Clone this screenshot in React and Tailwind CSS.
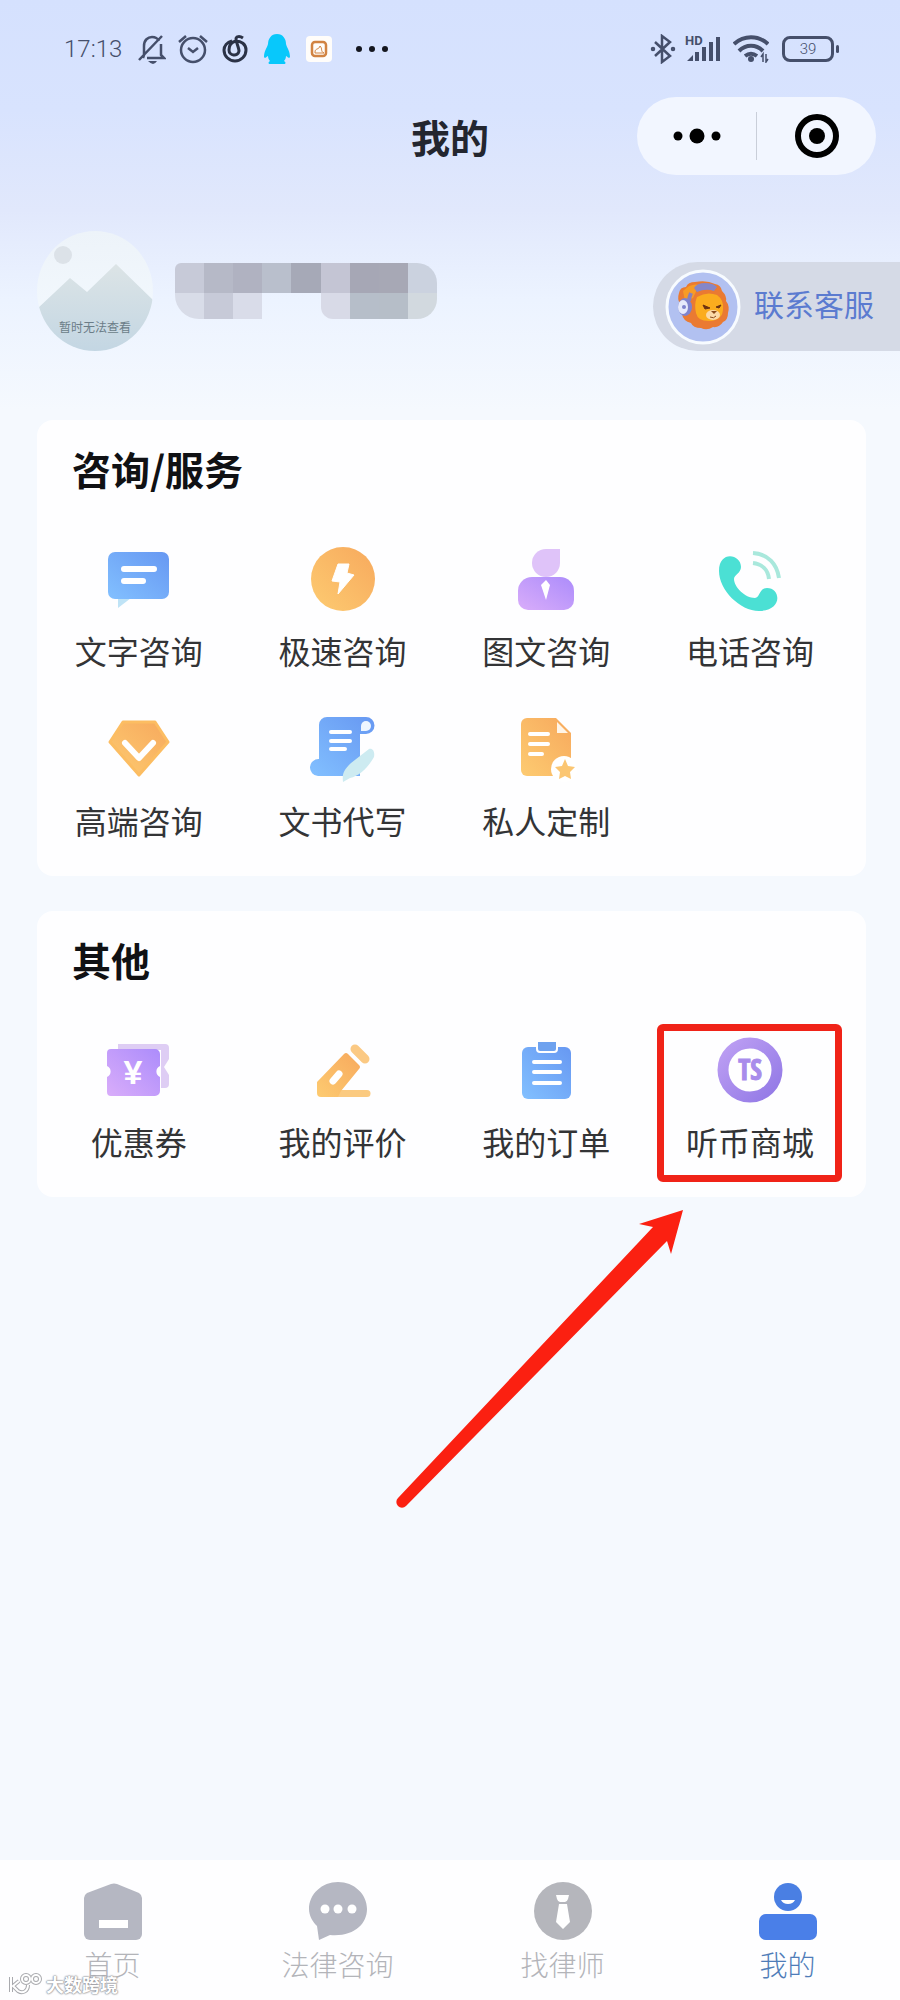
import React from "react";

const Gradients = () => (
  <svg className="absolute w-0 h-0" aria-hidden="true">
    <defs>
      <linearGradient id="blue" x1="1" y1="0" x2="0" y2="1">
        <stop offset="0" stopColor="#6798f2" />
        <stop offset="1" stopColor="#82c0ff" />
      </linearGradient>
      <linearGradient id="orange" x1="1" y1="0" x2="0" y2="1">
        <stop offset="0" stopColor="#f7a95d" />
        <stop offset="1" stopColor="#fdcb71" />
      </linearGradient>
      <linearGradient id="purple" x1="1" y1="0" x2="0" y2="1">
        <stop offset="0" stopColor="#ac8cfb" />
        <stop offset="1" stopColor="#d9adfa" />
      </linearGradient>
      <linearGradient id="ring" x1="0" y1="0" x2="1" y2="1">
        <stop offset="0" stopColor="#bd9ff3" />
        <stop offset="1" stopColor="#9279e6" />
      </linearGradient>
      <linearGradient id="sky" x1="0" y1="0" x2="0" y2="1">
        <stop offset="0" stopColor="#edf3f9" />
        <stop offset="1" stopColor="#f4faff" />
      </linearGradient>
      <linearGradient id="hill" x1="0" y1="0" x2="0" y2="1">
        <stop offset="0" stopColor="#dce4e6" />
        <stop offset="1" stopColor="#c3d6e3" />
      </linearGradient>
    </defs>
  </svg>
);

const Icon = ({ children }) => (
  <svg viewBox="0 0 72 72" className="w-[72px] h-[72px]" fill="none" aria-hidden="true">
    {children}
  </svg>
);

const TextIcon = () => (
  <Icon>
    <path d="M15 56v10l13-10z" fill="#bfe3f6" />
    <rect x="5" y="10" width="61" height="47" rx="7" fill="url(#blue)" />
    <path d="M21 27h30M21 39h19" stroke="#fff" strokeWidth="6" strokeLinecap="round" />
  </Icon>
);

const BoltIcon = () => (
  <Icon>
    <circle cx="36" cy="37" r="32" fill="url(#orange)" />
    <path
      d="M31 22h11l-2 9 7 2-16 19 2-12-8-1z"
      fill="#fff"
      stroke="#fff"
      strokeWidth="1"
      strokeLinejoin="round"
    />
  </Icon>
);

const PersonIcon = () => (
  <Icon>
    <path d="M36 7h14v14a14 14 0 1 1-14-14z" fill="#dfc3f9" />
    <path
      d="M22 35h28a14 14 0 0 1 14 14v9a10 10 0 0 1-10 10H18A10 10 0 0 1 8 58v-9a14 14 0 0 1 14-14z"
      fill="url(#purple)"
    />
    <path d="M36 38l4 5-4 15-5-15z" fill="#fff" />
  </Icon>
);

const PhoneIcon = () => (
  <Icon>
    <path
      d="M5 29C5 8 27 12 27 25c0 6-7 8-7 12 0 8 11 19 21 19 5 0 4-10 12-10 14 0 16 23-8 23C26 69 5 48 5 29z"
      fill="#4be0d4"
    />
    <path d="M39 11c15 1 24 11 26 25" stroke="#a9e8dc" strokeWidth="4" />
    <path d="M39 21c9 1 15 7 16 16" stroke="#a9e8dc" strokeWidth="4" />
  </Icon>
);

const DiamondIcon = () => (
  <Icon>
    <path
      d="M20 10h32l13 20-29 33L7 30z"
      fill="url(#orange)"
      stroke="#fcbd62"
      strokeWidth="3"
      strokeLinejoin="round"
    />
    <path
      d="M22 31l14 15 14-15"
      stroke="#fff"
      strokeWidth="6"
      strokeLinecap="round"
      strokeLinejoin="round"
    />
  </Icon>
);

const ScrollIcon = () => (
  <Icon>
    <path
      d="M20 5h39a8 8 0 0 1 0 17h-6v42H11A8 8 0 0 1 12 47V13a8 8 0 0 1 8-8z"
      fill="url(#blue)"
    />
    <path d="M54 18v-4a5 5 0 1 1 5 5h-5z" fill="#eef6ff" />
    <path d="M24 20h19M24 29h19M24 37h14" stroke="#fff" strokeWidth="4" strokeLinecap="round" />
    <path d="M36 70c-1-9 1-12 8-19l18-14c4-1 6 3 5 8-5 9-14 19-24 21z" fill="#cdebf1" />
  </Icon>
);

const CustomIcon = () => (
  <Icon>
    <path d="M17 6h29l15 15v43H17a6 6 0 0 1-6-6V12a6 6 0 0 1 6-6z" fill="url(#orange)" />
    <path d="M47 10v11h11z" fill="#fff5e8" />
    <path d="M20 22h18M20 32h18M20 42h12" stroke="#fff" strokeWidth="4" strokeLinecap="round" />
    <circle cx="54" cy="57" r="13" fill="#fff" />
    <path d="M55 47l3 7 7 1-5 5 1 7-6-3-6 3 1-7-5-5 7-1z" fill="#fbc672" />
  </Icon>
);

const CouponIcon = () => (
  <Icon>
    <path d="M15 11h47a4 4 0 0 1 4 4v11l-5 8 5 8v9a4 4 0 0 1-4 4h-4V17H15z" fill="#decdf4" />
    <path
      d="M8 16h44a5 5 0 0 1 5 5v12a6 6 0 0 0 0 11v14a5 5 0 0 1-5 5H8a4 4 0 0 1-4-4V44a6 6 0 0 0 0-11V20a4 4 0 0 1 4-4z"
      fill="url(#purple)"
    />
    <text
      x="30"
      y="51"
      textAnchor="middle"
      fill="#fff"
      className="text-[34px] font-bold font-['Liberation_Sans',sans-serif]"
    >
      ¥
    </text>
  </Icon>
);

const PencilIcon = () => (
  <Icon>
    <path d="M34 57h26a3 3 0 0 1 0 7H28z" fill="#fbca80" />
    <path d="M37 21q2-2 4 0l11 11q2 2 0 4L34 58l-3 6H14q-4 0-4-4V49z" fill="url(#orange)" />
    <path d="M48 16l10 10" stroke="#fbc983" strokeWidth="9" strokeLinecap="round" />
    <path d="M26 48l6-7" stroke="#fff" strokeWidth="7" strokeLinecap="round" />
  </Icon>
);

const OrderIcon = () => (
  <Icon>
    <rect x="12" y="14" width="49" height="52" rx="6" fill="url(#blue)" />
    <path d="M27 8h20v8a3 3 0 0 1-3 3H30a3 3 0 0 1-3-3z" fill="#6ea2ef" stroke="#fff" strokeWidth="2" />
    <path d="M24 29h26M24 39h26M24 50h26" stroke="#fff" strokeWidth="4" strokeLinecap="round" />
  </Icon>
);

const MallIcon = () => (
  <Icon>
    <circle cx="36" cy="37" r="27" stroke="url(#ring)" strokeWidth="11" fill="#fff" />
    <text
      x="36"
      y="47"
      textAnchor="middle"
      fill="#a98ceb"
      stroke="#a98ceb"
      className="text-[28px] font-bold font-['Liberation_Sans_Narrow','Open_Sans_Condensed','Roboto_Condensed','DejaVu_Sans_Condensed','Roboto',sans-serif]"
    >
      TS
    </text>
  </Icon>
);

const services = [
  { name: "文字咨询", icon: <TextIcon /> },
  { name: "极速咨询", icon: <BoltIcon /> },
  { name: "图文咨询", icon: <PersonIcon /> },
  { name: "电话咨询", icon: <PhoneIcon /> },
  { name: "高端咨询", icon: <DiamondIcon /> },
  { name: "文书代写", icon: <ScrollIcon /> },
  { name: "私人定制", icon: <CustomIcon /> },
];

const others = [
  { name: "优惠券", icon: <CouponIcon /> },
  { name: "我的评价", icon: <PencilIcon /> },
  { name: "我的订单", icon: <OrderIcon /> },
  { name: "听币商城", icon: <MallIcon />, marked: true },
];

const tabs = [
  {
    name: "首页",
    icon: (
      <>
        <path
          d="M27 2q3-1 6 0l22 9q3 2 3 5v36a6 6 0 0 1-6 6H6a6 6 0 0 1-6-6V16q0-3 3-5z"
          fill="#b5b7c2"
        />
        <path d="M15 38h29v8H15z" fill="#fff" />
      </>
    ),
  },
  {
    name: "法律咨询",
    icon: (
      <>
        <path d="M29 0c16 0 29 12 29 27S45 55 21 53l-11 5-2-14C4 40 0 34 0 27 0 12 13 0 29 0z" fill="#b5b7c2" />
        <circle cx="16" cy="27" r="4.5" fill="#fff" />
        <circle cx="29" cy="27" r="4.5" fill="#fff" />
        <circle cx="43" cy="27" r="4.5" fill="#fff" />
      </>
    ),
  },
  {
    name: "找律师",
    icon: (
      <>
        <circle cx="29" cy="29" r="29" fill="#b5b6bc" />
        <path d="M22 13h13l-1 4q-1 3-3 3h-5q-2 0-3-3zM25 22h8l3 18-7 7-7-7z" fill="#fff" />
      </>
    ),
  },
  {
    name: "我的",
    active: true,
    icon: (
      <>
        <circle cx="29" cy="15" r="14" fill="#4a7fe3" />
        <path d="M22 18h14q-2 4-7 4t-7-4z" fill="#fff" />
        <rect y="32" width="58" height="26" rx="7" fill="#4a7fe8" />
      </>
    ),
  },
];

const StatusBar = () => (
  <div className="flex items-center justify-between h-[97px] pl-16 pr-[61px] text-[#454f6b]">
    <div className="flex items-center">
      <span className="text-[24px] leading-8 font-light font-['Roboto',sans-serif]">17:13</span>
      <svg viewBox="0 0 28 30" className="ml-4 w-7 h-[30px]" fill="none" stroke="currentColor" strokeWidth="2.5">
        <path d="M5 24l1-3V12c0-6 4-9 8-9 3 0 6 2 7 4M23 10v11l3 3H9M1 26L24 2" />
        <path d="M10 27h9q-2 3-4 3t-5-3z" fill="currentColor" stroke="none" />
      </svg>
      <svg viewBox="0 0 30 30" className="ml-3 w-[30px] h-[30px]" fill="none" stroke="currentColor" strokeWidth="2.5">
        <circle cx="15" cy="16" r="12" />
        <path d="M10 14l5 4 5-4M1 8l7-6M29 8l-7-6" />
      </svg>
      <svg viewBox="0 0 26 28" className="ml-[14px] w-[26px] h-7" fill="none" stroke="#2b3246" strokeWidth="3">
        <path d="M10 6C5 7 2 11 2 15a11 11 0 0 0 22 0c0-6-5-9-10-9-5 1-7 5-7 9 0 6 9 7 10 1 0-3-3-9-3-12 0-3 4-3 7-1" />
      </svg>
      <svg viewBox="0 0 26 30" className="ml-4 w-[26px] h-[30px]" fill="#08c8fb">
        <path d="M13 0c6 0 9 5 9 10 1 4 4 7 4 13-1 2-2 0-4-1 0 2-1 4-2 5 2 1 2 3 0 3H6c-2 0-2-2 0-3-1-1-2-3-2-5-2 1-3 3-4 1 0-6 3-9 4-13 0-5 3-10 9-10z" />
      </svg>
      <svg viewBox="0 0 26 26" className="ml-4 w-[26px] h-[26px]" fill="none">
        <rect width="26" height="26" rx="4" fill="#fffdfa" />
        <rect x="6" y="6" width="14" height="14" rx="3" stroke="#d18342" strokeWidth="2.5" />
        <path d="M9 16c0-4 4-2 5-6 3 3 0 5 4 7H9z" stroke="#d18342" />
      </svg>
      <svg viewBox="0 0 32 8" className="ml-6 w-8 h-2" fill="#14161f">
        <circle cx="3" cy="4" r="3" />
        <circle cx="16" cy="4" r="3" />
        <circle cx="29" cy="4" r="3" />
      </svg>
    </div>
    <div className="flex items-center">
      <svg viewBox="0 0 26 30" className="w-[26px] h-[30px]" fill="none" stroke="currentColor" strokeWidth="2.5">
        <path d="M5 8l15 14-8 6V2l8 6L5 22" />
        <circle cx="3" cy="15" r="1" />
        <circle cx="23" cy="15" r="1" />
      </svg>
      <svg viewBox="0 0 36 28" className="ml-[9px] w-9 h-7" fill="currentColor">
        <text x="0" y="10" className="text-[13px] font-bold font-['Roboto',sans-serif]">
          HD
        </text>
        <path d="M2 26l6-6v6zM10 17h4v9h-4zM17 12h4v14h-4zM24 7h4v19h-4zM31 2h4v24h-4z" />
      </svg>
      <svg viewBox="0 0 36 28" className="ml-3 w-9 h-7" fill="none" stroke="currentColor" strokeWidth="4">
        <path d="M1 9c10-9 24-9 34 0M6 16c7-7 17-7 24 0M12 21c4-3 8-3 12 0" />
        <circle cx="18" cy="24" r="3" fill="currentColor" stroke="none" />
        <path d="M30 27v-8l-2 3M33 19v8l2-3" strokeWidth="1.5" />
      </svg>
      <div className="ml-[13px] w-[52px] h-[26px] rounded-lg border-[3px] border-current flex items-center justify-center text-[15px] leading-5 font-light font-['Roboto',sans-serif]">
        39
      </div>
      <div className="ml-[2px] w-[3px] h-2 rounded-sm bg-[#454f6b]"></div>
    </div>
  </div>
);

const TitleBar = () => (
  <div className="grid grid-cols-[1fr_auto_1fr] items-center h-[78px]">
    <h1 className="col-start-2 text-[39px] leading-[46px] font-bold text-[#23262f]">我的</h1>
    <div className="justify-self-end mr-6 w-[239px] h-[78px] rounded-full bg-[#f2f6ff] flex items-center">
      <button aria-label="更多" className="flex-1 h-full flex items-center justify-center">
        <svg viewBox="0 0 48 16" className="w-12 h-4">
          <circle cx="5" cy="8" r="4.5" />
          <circle cx="24" cy="8" r="7.5" />
          <circle cx="43" cy="8" r="4.5" />
        </svg>
      </button>
      <div className="w-px h-12 bg-[#c9ced9]"></div>
      <button aria-label="关闭" className="flex-1 h-full flex items-center justify-center">
        <svg viewBox="0 0 44 44" className="w-11 h-11">
          <circle cx="22" cy="22" r="19" fill="none" stroke="#000" strokeWidth="6" />
          <circle cx="22" cy="22" r="8" />
        </svg>
      </button>
    </div>
  </div>
);

const Avatar = () => (
  <svg viewBox="0 0 120 120" className="w-[120px] h-[120px]">
    <clipPath id="round">
      <ellipse cx="60" cy="60" rx="58" ry="60" />
    </clipPath>
    <g clipPath="url(#round)">
      <rect width="120" height="120" fill="url(#sky)" />
      <circle cx="28" cy="24" r="9" fill="#dce2e8" />
      <path d="M0 80l35-33 17 14 29-28 39 38v50H0z" fill="url(#hill)" />
    </g>
    <text
      x="60"
      y="101"
      textAnchor="middle"
      fill="#6b7d88"
      className="text-[12px] font-['Noto_Sans_CJK_SC',sans-serif]"
    >
      暂时无法查看
    </text>
  </svg>
);

// nickname is hidden behind a mosaic
const HiddenName = () => (
  <div className="grid grid-cols-9 grid-rows-[30px_26px] w-[262px] rounded-l-md rounded-r-[20px] overflow-hidden">
    <div className="bg-[#c7cad8]"></div>
    <div className="bg-[#b6b9c7]"></div>
    <div className="bg-[#b0b2c1]"></div>
    <div className="bg-[#b9bfcc]"></div>
    <div className="bg-[#a6a9b7]"></div>
    <div className="bg-[#c4c5d4]"></div>
    <div className="bg-[#a6a7b5]"></div>
    <div className="bg-[#a7a8b5]"></div>
    <div className="bg-[#cbd2df]"></div>
    <div className="bg-[#d8dce8] rounded-bl-[24px]"></div>
    <div className="bg-[#c7cad8]"></div>
    <div className="bg-[#d9dce9]"></div>
    <div></div>
    <div></div>
    <div className="bg-[#d8dae7] rounded-bl-[12px]"></div>
    <div className="bg-[#b6bec9]"></div>
    <div className="bg-[#b6bec8]"></div>
    <div className="bg-[#d2d9df]"></div>
  </div>
);

const Lion = () => (
  <svg viewBox="0 0 76 76" className="w-[76px] h-[76px]">
    <circle cx="38" cy="38" r="36" fill="#b2c1f1" stroke="#f7fbff" strokeWidth="3" />
    <path
      d="M14 24q1-6 7-6 2-5 9-5 12-2 20 2 6 1 7 7 5 5 4 10 4 5 2 12 0 7-5 9-4 6-10 5-6 4-12 1-8 0-10-5-8-2-9-9-4-4-2-10-3-5-1-11z"
      fill="#ea7a32"
    />
    <path d="M18 22q8-8 16-6l-6 13-8 3z" fill="#f79b26" />
    <path d="M32 28q10-6 20-2 7 5 6 14 0 10-12 12-13 1-15-8-2-9 1-16z" fill="#fbac1e" />
    <path d="M29 19q3-5 11-5 8 0 12 4l-3 4q-8-3-17 1z" fill="#8586c8" />
    <path d="M26 24q-2 5-2 8" stroke="#8a80b8" strokeWidth="4" fill="none" />
    <ellipse cx="20" cy="38" rx="7" ry="9" fill="#7e83cd" />
    <ellipse cx="18" cy="38" rx="5" ry="7" fill="#e6eafb" />
    <circle cx="19" cy="38" r="2" fill="#7e83cd" />
    <path d="M38 36l7 3-5 1zM56 36l-5 2 3 1z" fill="#6b3110" stroke="#6b3110" />
    <ellipse cx="48" cy="46" rx="7" ry="5" fill="#fbd9a9" />
    <path d="M46 42h6l-3 3z" fill="#8a4a1b" />
    <path d="M45 48q4 2 6-1" stroke="#8a4a1b" fill="none" />
  </svg>
);

const Profile = () => (
  <div className="flex items-center mt-14 pl-[35px]">
    <Avatar />
    <div className="ml-5">
      <HiddenName />
    </div>
    <button className="ml-auto self-end flex items-center h-[89px] w-[247px] pl-3 rounded-l-full bg-[#d5dae6] text-[30px] leading-10 text-[#5b7bd0]">
      <Lion />
      <span className="ml-[13px] pb-2">联系客服</span>
    </button>
  </div>
);

// red frame and arrow pointing at the highlighted entry
const Marker = () => (
  <>
    <div className="absolute -top-[9px] -bottom-[21px] left-[9px] right-[10px] rounded-md border-[7px] border-[#f02318] pointer-events-none"></div>
    <svg
      viewBox="0 0 292 302"
      className="absolute top-[174px] right-[165px] w-[292px] h-[302px] pointer-events-none"
      aria-hidden="true"
    >
      <path
        d="M3 291L258 20l-14-3 44-14-12 44-4-13L11 299a5.5 5.5 0 0 1-8-8z"
        fill="#fb2011"
      />
    </svg>
  </>
);

const Card = ({ title, items }) => (
  <section className="ml-[37px] mr-[34px] pt-[25px] pb-9 rounded-2xl bg-[#fefeff]">
    <h2 className="pl-[35px] text-[39px] leading-[46px] font-bold text-[#101114]">{title}</h2>
    <ul className="grid grid-cols-4 gap-y-[42px] mt-[51px] pr-[14px]">
      {items.map((item) => (
        <li key={item.name} className="relative">
          <button className="w-full flex flex-col items-center gap-4">
            {item.icon}
            <span className="text-[32px] leading-10 text-[#333436]">{item.name}</span>
          </button>
          {item.marked ? <Marker /> : null}
        </li>
      ))}
    </ul>
  </section>
);

const TabBar = () => (
  <nav className="relative grid grid-cols-4 bg-[#fefeff] pt-[22px] pb-5">
    {tabs.map((tab) => (
      <a
        key={tab.name}
        href="#"
        className={`flex flex-col items-center gap-2 text-[28px] leading-8 font-light ${
          tab.active ? "text-[#4f7cb8]" : "text-[#b3b4b9]"
        }`}
      >
        <svg viewBox="0 0 58 58" className="w-[58px] h-[58px]" aria-hidden="true">
          {tab.icon}
        </svg>
        <span>{tab.name}</span>
      </a>
    ))}
    <div className="absolute left-2 bottom-1 flex items-center gap-1 text-[18px] leading-6 font-bold text-white [text-shadow:0_0_2px_#8f9096,0_0_2px_#8f9096,0_0_1px_#8f9096]">
      <svg viewBox="0 0 34 24" className="w-[34px] h-6" fill="none">
        <g stroke="#a9aaae" strokeWidth="4">
          <path d="M3 5v15M11 9l-6 5 5 5c5 3 10 0 10-6" />
          <circle cx="18" cy="7" r="4" />
          <circle cx="28" cy="7" r="4" />
        </g>
        <g stroke="#fff" strokeWidth="2">
          <path d="M3 5v15M11 9l-6 5 5 5c5 3 10 0 10-6" />
          <circle cx="18" cy="7" r="4" />
          <circle cx="28" cy="7" r="4" />
        </g>
      </svg>
      大数跨境
    </div>
  </nav>
);

const App = () => {
  return (
    <div className="min-h-screen flex flex-col bg-[#f5f9fe] bg-[linear-gradient(to_bottom,#d5e1fe_0px,#d8e3fe_110px,#e1e8fc_210px,#ecf3ff_300px,#f5f9fe_410px)] font-['Noto_Sans_CJK_SC',sans-serif]">
      <Gradients />
      <header>
        <StatusBar />
        <TitleBar />
        <Profile />
      </header>
      <main className="flex-1 flex flex-col gap-[35px] pt-[69px] pb-10">
        <Card title="咨询/服务" items={services} />
        <Card title="其他" items={others} />
      </main>
      <TabBar />
    </div>
  );
};

export default App;
